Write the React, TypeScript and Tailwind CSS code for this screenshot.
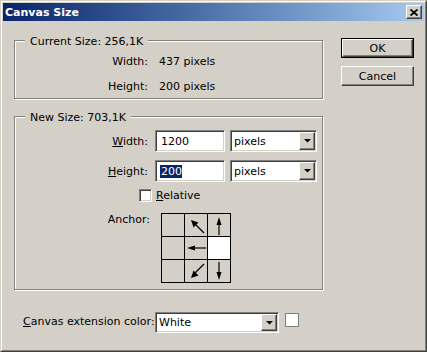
import type { ReactNode } from 'react'

// Win2k-style 3D edges
const raised =
  'border border-t-white border-l-white border-r-[#404040] border-b-[#404040] shadow-[inset_-1px_-1px_0_#808080]'
const sunken =
  'border border-t-[#808080] border-l-[#808080] border-r-white border-b-white shadow-[inset_1px_1px_0_#404040,inset_-1px_-1px_0_#d4d0c8]'
const etched = 'border border-[#808080] shadow-[1px_1px_0_#fff,inset_1px_1px_0_#fff]'

function DownTriangle() {
  return (
    <svg width="7" height="4" viewBox="0 0 7 4">
      <polygon points="0,0 7,0 3.5,3.5" fill="#000" />
    </svg>
  )
}

function Combo({ value, width, height }: { value: string; width: string; height: string }) {
  return (
    <div className={`flex items-stretch bg-white ${sunken} ${width} ${height}`}>
      <span className="flex flex-1 items-center pl-[3px] leading-[13px]">{value}</span>
      <span
        className={`m-[1px] flex w-[16px] items-center justify-center bg-[#d4d0c8] ${raised}`}
      >
        <DownTriangle />
      </span>
    </div>
  )
}

function GroupBox({
  title,
  height,
  children,
}: {
  title: string
  height: string
  children: ReactNode
}) {
  return (
    <div className={`flex w-[309px] flex-col ${etched} ${height}`}>
      <span className="-mt-[6px] ml-[10px] w-fit bg-[#d4d0c8] px-[5px] leading-[13px]">
        {title}
      </span>
      {children}
    </div>
  )
}

// Arrow glyphs for the anchor grid, drawn in a 22x22 cell
const ARROWS: Record<string, ReactNode> = {
  nw: (
    <>
      <line x1="19" y1="19" x2="10" y2="10" stroke="#000" strokeWidth="1.2" />
      <polygon points="6,6 13.5,8.5 8.5,13.5" fill="#000" />
    </>
  ),
  n: (
    <>
      <line x1="11" y1="9" x2="11" y2="21" stroke="#000" strokeWidth="1.2" />
      <polygon points="11,3 8.5,11 13.5,11" fill="#000" />
    </>
  ),
  w: (
    <>
      <line x1="9" y1="11" x2="21" y2="11" stroke="#000" strokeWidth="1.2" />
      <polygon points="2,11 10,8.5 10,13.5" fill="#000" />
    </>
  ),
  sw: (
    <>
      <line x1="19" y1="4" x2="10" y2="13" stroke="#000" strokeWidth="1.2" />
      <polygon points="6,18 8.5,10.5 13.5,15.5" fill="#000" />
    </>
  ),
  s: (
    <>
      <line x1="11" y1="2" x2="11" y2="13" stroke="#000" strokeWidth="1.2" />
      <polygon points="11,20 8.5,12 13.5,12" fill="#000" />
    </>
  ),
}

const ANCHOR_CELLS: (string | null)[] = [null, 'nw', 'n', null, 'w', 'sel', null, 'sw', 's']

function AnchorGrid() {
  return (
    <div className="grid w-[70px] grid-cols-[22px_22px_22px] gap-[1px] bg-black p-[1px]">
      {ANCHOR_CELLS.map((c, i) => (
        <div
          key={i}
          className={`h-[22px] w-[22px] ${c === 'sel' ? 'bg-white' : 'bg-[#d4d0c8]'}`}
        >
          {c && c !== 'sel' && (
            <svg width="22" height="22" viewBox="0 0 22 22">
              {ARROWS[c]}
            </svg>
          )}
        </div>
      ))}
    </div>
  )
}

export default function App() {
  return (
    <div className="h-[352px] w-[427px] border border-t-[#d4d0c8] border-l-[#d4d0c8] border-r-[#404040] border-b-[#404040] bg-[#d4d0c8] font-['DejaVu_Sans',sans-serif] text-[11px] text-black">
      <div className="h-full border border-t-white border-l-white border-r-[#808080] border-b-[#808080] p-[1px]">
        {/* caption */}
        <div className="flex h-[18px] items-center bg-gradient-to-r from-[#0a246a] to-[#a6caf0] pl-[2px] pr-[2px]">
          <span className="flex-1 text-[11px] font-bold leading-[13px] text-white">Canvas Size</span>
          <span
            className={`flex h-[14px] w-[16px] items-center justify-center bg-[#d4d0c8] ${raised}`}
          >
            <svg width="8" height="7" viewBox="0 0 8 7">
              <path d="M0.5 0.5 L7.5 6.5 M7.5 0.5 L0.5 6.5" stroke="#000" strokeWidth="1.8" />
            </svg>
          </span>
        </div>

        {/* body */}
        <div className="flex pl-[11px] pt-[17px]">
          <div className="mt-[2px] flex flex-col">
            <GroupBox title="Current Size: 256,1K" height="h-[59px]">
              <div className="mt-[7px] flex flex-col gap-[12px] leading-[13px]">
                <div className="flex">
                  <span className="w-[133px] text-right">Width:</span>
                  <span className="ml-[11px]">437 pixels</span>
                </div>
                <div className="flex">
                  <span className="w-[133px] text-right">Height:</span>
                  <span className="ml-[11px]">200 pixels</span>
                </div>
              </div>
            </GroupBox>

            <div className="mt-[17px]">
              <GroupBox title="New Size: 703,1K" height="h-[174px]">
                <div className="mt-[6px] flex flex-col">
                  <div className="flex items-center">
                    <span className="w-[133px] text-right leading-[13px]">
                      <u className="underline-offset-[1px]">W</u>idth:
                    </span>
                    <div className={`ml-[7px] flex h-[22px] w-[70px] items-center bg-white pl-[5px] ${sunken}`}>
                      <span className="leading-[13px]">1200</span>
                    </div>
                    <div className="ml-[5px]">
                      <Combo value="pixels" width="w-[87px]" height="h-[22px]" />
                    </div>
                  </div>
                  <div className="mt-[8px] flex items-center">
                    <span className="w-[133px] text-right leading-[13px]">
                      <u className="underline-offset-[1px]">H</u>eight:
                    </span>
                    <div className={`ml-[7px] flex h-[22px] w-[70px] items-center bg-white pl-[4px] ${sunken}`}>
                      <span className="bg-[#0a246a] pl-[1px] leading-[13px] text-white">200</span>
                    </div>
                    <div className="ml-[5px]">
                      <Combo value="pixels" width="w-[87px]" height="h-[22px]" />
                    </div>
                  </div>
                  <div className="ml-[124px] mt-[7px] flex items-center">
                    <span className={`h-[13px] w-[13px] bg-white ${sunken}`} />
                    <span className="ml-[4px] leading-[13px]">
                      <u className="underline-offset-[1px]">R</u>elative
                    </span>
                  </div>
                  <div className="mt-[11px] flex items-start">
                    <span className="w-[135px] text-right leading-[13px]">Anchor:</span>
                    <div className="ml-[11px]">
                      <AnchorGrid />
                    </div>
                  </div>
                </div>
              </GroupBox>
            </div>

            <div className="ml-[9px] mt-[22px] flex items-start">
              <span className="mt-[3px] w-[132px] leading-[13px]">
                <u className="underline-offset-[1px]">C</u>anvas extension color:
              </span>
              <Combo value="White" width="w-[124px]" height="h-[21px]" />
              <span className="ml-[6px] mt-[1px] h-[14px] w-[14px] border border-[#808080] bg-white" />
            </div>
          </div>

          {/* buttons */}
          <div className="ml-[18px] flex flex-col">
            <div className="h-[20px] w-[73px] border border-black">
              <div className={`flex h-full items-center justify-center bg-[#d4d0c8] leading-[13px] ${raised}`}>
                OK
              </div>
            </div>
            <div
              className={`mt-[8px] flex h-[20px] w-[73px] items-center justify-center bg-[#d4d0c8] leading-[13px] ${raised}`}
            >
              Cancel
            </div>
          </div>
        </div>
      </div>
    </div>
  )
}
